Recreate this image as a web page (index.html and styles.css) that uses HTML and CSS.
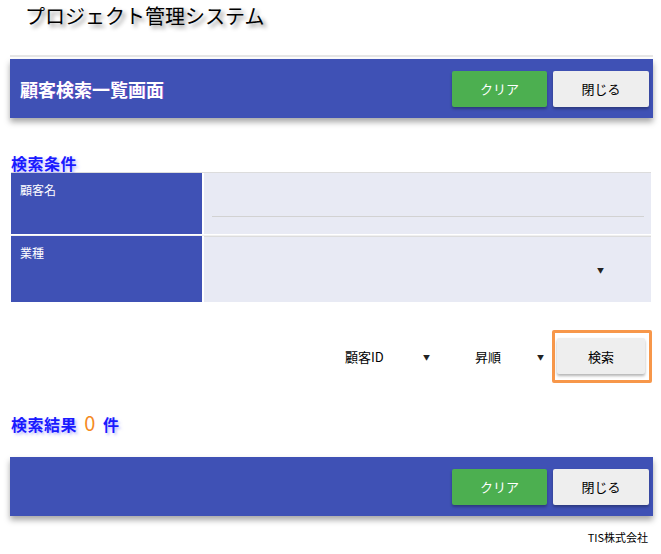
FILE: index.html
```html
<!DOCTYPE html>
<html lang="ja">
<head>
<meta charset="utf-8">
<title>顧客検索一覧画面</title>
<link rel="stylesheet" href="styles.css">
</head>
<body>
<div class="page">
  <h1 class="app-title">プロジェクト管理システム</h1>
  <div class="rule"></div>
  <div class="bar">
    <div class="bar-title">顧客検索一覧画面</div>
    <div class="bar-actions">
      <button class="btn btn-green">クリア</button>
      <button class="btn btn-gray">閉じる</button>
    </div>
  </div>

  <h2 class="section">検索条件</h2>
  <div class="cond">
    <div class="row row1">
      <div class="label">顧客名</div>
      <div class="field"><div class="input-line"></div></div>
    </div>
    <div class="row row2">
      <div class="label">業種</div>
      <div class="field field-select"><span class="arrow">▼</span></div>
    </div>
  </div>

  <div class="sortbar">
    <div class="sel sel-key"><span>顧客ID</span><span class="arrow">▼</span></div>
    <div class="sel sel-ord"><span>昇順</span><span class="arrow">▼</span></div>
    <div class="focus-ring"><button class="btn btn-search">検索</button></div>
  </div>

  <h2 class="section result">検索結果 <span class="count">0</span> 件</h2>

  <div class="bar bar-foot">
    <div class="bar-actions">
      <button class="btn btn-green">クリア</button>
      <button class="btn btn-gray">閉じる</button>
    </div>
  </div>
  <div class="copy">TIS株式会社</div>
</div>
</body>
</html>
```
FILE: styles.css
```css
* { box-sizing: border-box; }
html, body { margin: 0; padding: 0; background: #fff; }
body {
  font-family: "Noto Sans CJK JP", "Noto Sans", sans-serif;
  color: #000;
}
.page { padding: 0 8px 0 10px; }

.app-title {
  margin: 0;
  padding: 3px 0 0 15px;
  height: 55px;
  font-size: 20px;
  line-height: 26px;
  font-weight: normal;
  text-shadow: 3px 3px 4px rgba(0,0,0,0.45);
}
.rule { height: 2px; background: #e6e6e6; }

.bar {
  margin-top: 2px;
  height: 59px;
  background: #3f51b5;
  box-shadow: 0 4px 6px rgba(0,0,0,0.35);
  display: flex;
  align-items: center;
  justify-content: space-between;
  padding: 0 4px 0 10px;
}
.bar-title {
  color: #fff;
  font-size: 18px;
  font-weight: bold;
  text-shadow: 1px 0 0 rgba(255,0,255,0.25);
}
.bar-actions { display: flex; gap: 6px; margin-left: auto; }
.btn {
  width: 95px;
  height: 36px;
  border: none;
  border-radius: 2px;
  font-family: inherit;
  font-size: 13px;
  box-shadow: 0 2px 3px rgba(0,0,0,0.3);
  padding: 0;
}
.btn-green { background: #4caf50; color: #fff; }
.btn-gray { background: #eeeeee; color: #000; width: 96px; }

.section {
  margin: 37px 0 0 1px;
  height: 17px;
  font-size: 16px;
  line-height: 17px;
  font-weight: bold;
  letter-spacing: 0.5px;
  color: #1a1aff;
  text-shadow: 2px 2px 3px rgba(120,120,255,0.5);
}
.cond {
  margin: 0 2px 0 1px;
  border-top: 1px solid #dcdcdc;
}
.row { display: flex; gap: 2px; }
.row1 { height: 61px; }
.row2 { height: 67px; margin-top: 1px; border-top: 1px solid #f0f0f0; }
.label {
  width: 191px;
  background: #3f51b5;
  color: #fff;
  font-size: 12px;
  padding: 8px 9px;
}
.field {
  flex: 1;
  background: #e8eaf4;
  position: relative;
}
.row2 .field { border-top: 1px solid #dcdcdc; }
.input-line {
  position: absolute;
  left: 8px; right: 7px; top: 43px;
  height: 1px;
  background: #d2d2d2;
}
.field-select { display: flex; align-items: center; justify-content: flex-end; padding: 0 47px 0 0; }
.arrow { font-size: 7px; color: #222; }

.sortbar {
  display: flex;
  justify-content: flex-end;
  align-items: center;
  margin-top: 28px;
  padding-right: 1px;
}
.sel {
  display: flex;
  justify-content: space-between;
  align-items: center;
  font-size: 13px;
}
.sel-key { width: 85px; margin-right: 45px; }
.sel-ord { width: 69px; margin-right: 8px; }
.focus-ring {
  border: 3px solid #f7974a;
  border-radius: 2px;
  padding: 5px 4px 6px 2px;
}
.btn-search {
  width: 88px;
  background: #eeeeee;
  color: #000;
  font-size: 13px;
}

.result { margin-top: 30px; height: 20px; line-height: 20px; }
.count {
  color: #f58a1f;
  font-size: 20px;
  font-weight: normal;
  text-shadow: none;
  margin: 0 3px;
}
.bar-foot { margin-top: 24px; }
.copy {
  text-align: right;
  font-size: 11px;
  margin-top: 13px;
  padding-right: 5px;
}
```
